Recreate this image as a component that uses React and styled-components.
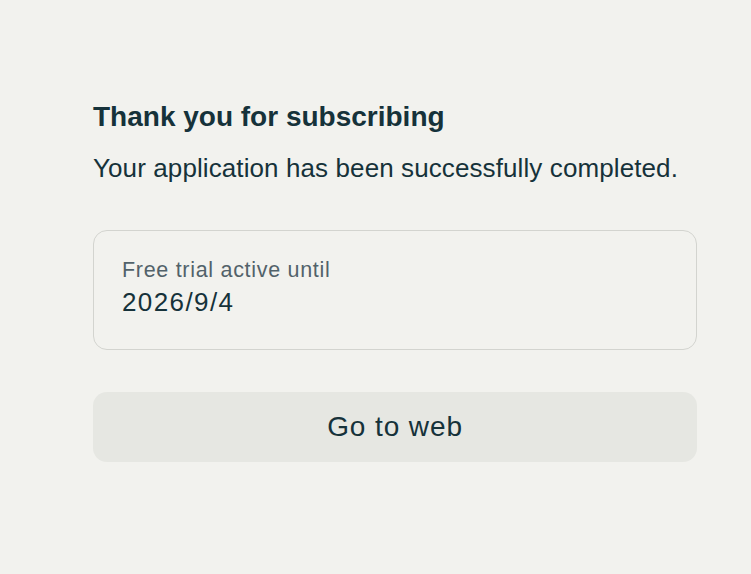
import React from 'react';
import styled, { createGlobalStyle } from 'styled-components';

const GlobalStyle = createGlobalStyle`
  html, body {
    margin: 0;
    padding: 0;
    background: #f2f2ee;
  }
  body {
    font-family: "Liberation Sans", Arial, sans-serif;
    color: #16323a;
  }
`;

const Page = styled.div`
  min-height: 574px;
  padding: 100px 0 0 93px;
  box-sizing: border-box;
`;

const Content = styled.div`
  width: 604px;
  display: flex;
  flex-direction: column;
`;

const Title = styled.h1`
  margin: 0;
  font-size: 28px;
  font-weight: 600;
  line-height: 34px;
`;

const Subtitle = styled.p`
  margin: 19px 0 0;
  font-size: 26px;
  line-height: 30px;
  font-weight: 400;
  letter-spacing: 0.1px;
`;

const Card = styled.div`
  margin-top: 47px;
  height: 120px;
  box-sizing: border-box;
  border: 1px solid #d3d4cf;
  border-radius: 14px;
  padding: 26px 28px;
  display: flex;
  flex-direction: column;
`;

const Label = styled.span`
  font-size: 21.5px;
  line-height: 26px;
  letter-spacing: 0.7px;
  color: #52626a;
`;

const Value = styled.span`
  margin-top: 4px;
  font-size: 26px;
  line-height: 30px;
  letter-spacing: 1.4px;
`;

const Button = styled.button`
  margin-top: 42px;
  height: 70px;
  border: none;
  border-radius: 14px;
  background: #e6e7e2;
  color: #16323a;
  font-family: inherit;
  font-size: 28px;
  letter-spacing: 0.9px;
  cursor: pointer;
`;

export default function App() {
  return (
    <>
      <GlobalStyle />
      <Page>
        <Content>
          <Title>Thank you for subscribing</Title>
          <Subtitle>Your application has been successfully completed.</Subtitle>
          <Card>
            <Label>Free trial active until</Label>
            <Value>2026/9/4</Value>
          </Card>
          <Button>Go to web</Button>
        </Content>
      </Page>
    </>
  );
}
